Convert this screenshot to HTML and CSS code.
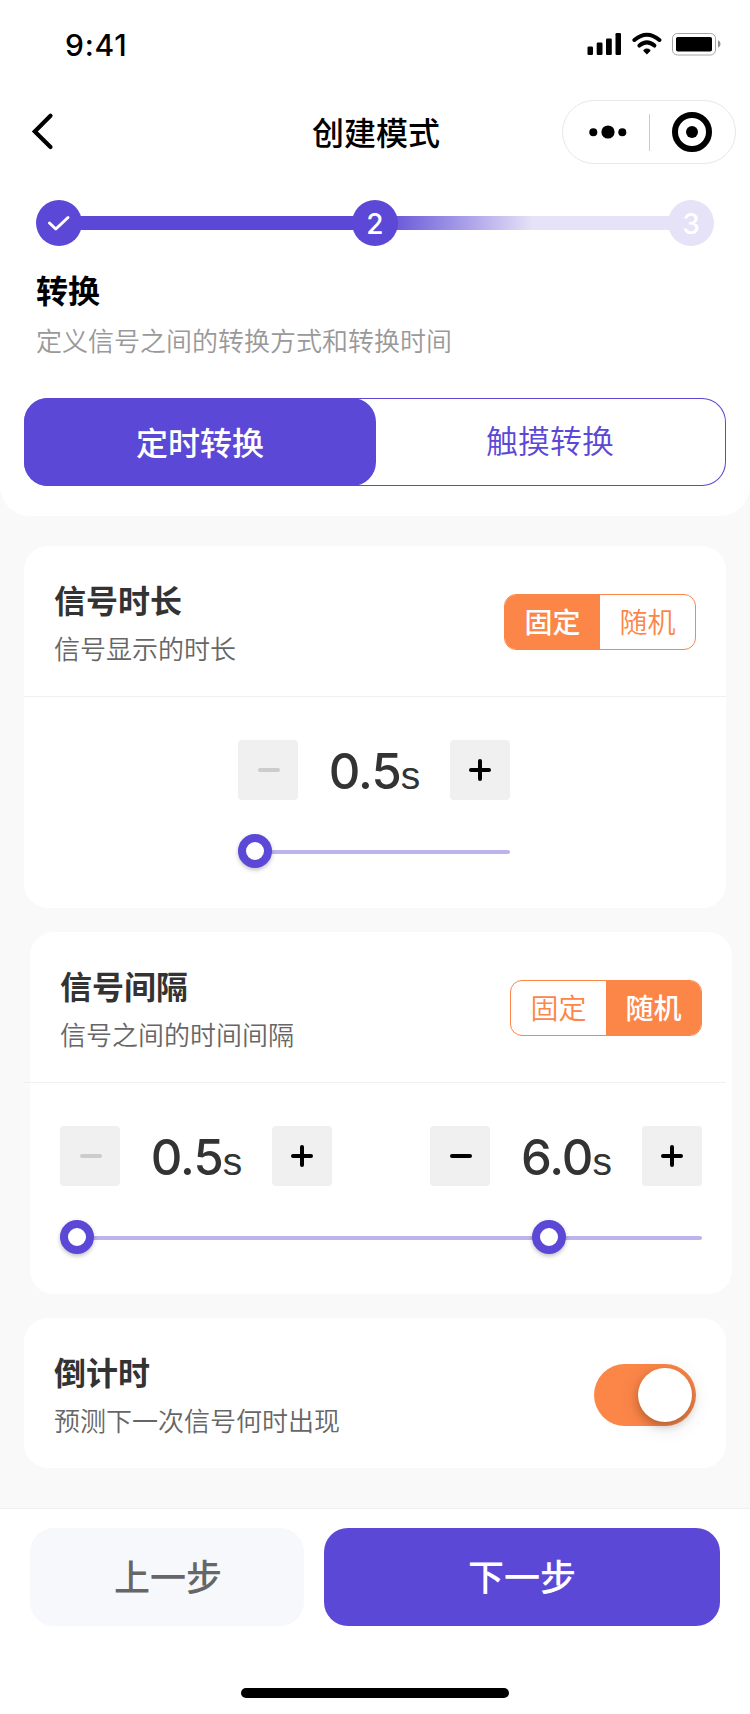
FILE: index.html
```html
<!DOCTYPE html>
<html lang="zh-CN">
<head>
    <meta charset="UTF-8">
    <meta name="viewport" content="width=device-width, initial-scale=1.0">
    <title>创建模式</title>
    <link rel="stylesheet" href="styles.css">
</head>
<body>
    <header class="top">
        <div class="status-bar">
            <span class="time">9:41</span>
            <svg class="status-icons" width="136" height="24" viewBox="0 0 136 24">
                <rect x="0.5" y="14.5" width="5.5" height="8.5" rx="1.2"/>
                <rect x="9.7" y="10.5" width="5.8" height="12.5" rx="1.2"/>
                <rect x="19" y="6.5" width="5.8" height="16.5" rx="1.2"/>
                <rect x="28.5" y="1" width="5.5" height="22" rx="1.2"/>
                <path d="M47.4 8 Q59.9 -2.4 72.4 8" fill="none" stroke="#000" stroke-width="4" stroke-linecap="round"/>
                <path d="M52.4 13.6 Q59.9 7.2 67.4 13.6" fill="none" stroke="#000" stroke-width="4" stroke-linecap="round"/>
                <path d="M56.4 18 Q59.9 15.2 63.4 18 Q63.7 18.8 62.9 19.6 L59.9 22.4 L56.9 19.6 Q56.1 18.8 56.4 18 Z"/>
                <rect x="85.5" y="1.5" width="43" height="21.5" rx="5" fill="none" stroke="#a6a6a6"/>
                <rect x="89" y="5" width="36" height="14.6" rx="1.8"/>
                <path d="M131 8.3 Q133.6 9.4 133.6 12 Q133.6 14.6 131 15.7 Z" fill="#8f8f8f"/>
            </svg>
        </div>

        <div class="nav">
            <svg class="back" width="24" height="40" viewBox="0 0 24 40">
                <path d="M20.5 3.8 L4.8 19.4 L20.5 35" fill="none" stroke="#000" stroke-width="4.2" stroke-linecap="round"/>
            </svg>
            <h1 class="nav-title">创建模式</h1>
            <div class="capsule">
                <svg width="38" height="14" viewBox="0 0 38 14">
                    <circle cx="4.3" cy="7.3" r="4"/>
                    <circle cx="19" cy="7" r="6.6"/>
                    <circle cx="33.3" cy="7.3" r="4"/>
                </svg>
                <span class="capsule-line"></span>
                <svg width="40" height="40" viewBox="0 0 40 40">
                    <circle cx="20" cy="20" r="17" fill="none" stroke="#000" stroke-width="6"/>
                    <circle cx="20" cy="20" r="6"/>
                </svg>
            </div>
        </div>

        <div class="steps">
            <span class="step done">
                <svg width="24" height="18" viewBox="0 0 24 18">
                    <path d="M2.5 8 L8.8 14 L21 2.5" fill="none" stroke="#fff" stroke-width="3" stroke-linecap="round" stroke-linejoin="round"/>
                </svg>
            </span>
            <span class="step-line"></span>
            <span class="step">2</span>
            <span class="step-line fade"></span>
            <span class="step todo">3</span>
        </div>

        <h2 class="step-title">转换</h2>
        <p class="step-desc">定义信号之间的转换方式和转换时间</p>

        <div class="tabs">
            <div class="tab active">定时转换</div>
            <div class="tab">触摸转换</div>
        </div>
    </header>

    <main>
        <section class="card">
            <div class="card-head">
                <div>
                    <h3 class="card-title">信号时长</h3>
                    <p class="card-desc">信号显示的时长</p>
                </div>
                <div class="segment">
                    <span class="option active">固定</span>
                    <span class="option">随机</span>
                </div>
            </div>
            <div class="card-body single">
                <div class="steppers">
                    <div class="stepper">
                        <button class="minus disabled"></button>
                        <span class="value">0.5<small>s</small></span>
                        <button class="plus"></button>
                    </div>
                </div>
                <div class="slider">
                    <span class="thumb" style="left: 0"></span>
                </div>
            </div>
        </section>

        <section class="card shifted">
            <div class="card-head">
                <div>
                    <h3 class="card-title">信号间隔</h3>
                    <p class="card-desc">信号之间的时间间隔</p>
                </div>
                <div class="segment">
                    <span class="option">固定</span>
                    <span class="option active">随机</span>
                </div>
            </div>
            <div class="card-body">
                <div class="steppers">
                    <div class="stepper">
                        <button class="minus disabled"></button>
                        <span class="value">0.5<small>s</small></span>
                        <button class="plus"></button>
                    </div>
                    <div class="stepper">
                        <button class="minus"></button>
                        <span class="value">6.0<small>s</small></span>
                        <button class="plus"></button>
                    </div>
                </div>
                <div class="slider">
                    <span class="thumb" style="left: 0"></span>
                    <span class="thumb" style="left: 472px"></span>
                </div>
            </div>
        </section>

        <section class="card">
            <div class="card-head">
                <div>
                    <h3 class="card-title">倒计时</h3>
                    <p class="card-desc">预测下一次信号何时出现</p>
                </div>
                <div class="switch"><span class="knob"></span></div>
            </div>
        </section>
    </main>

    <footer class="bottom">
        <div class="actions">
            <button class="prev">上一步</button>
            <button class="next">下一步</button>
        </div>
        <div class="home-bar"></div>
    </footer>
</body>
</html>
```
FILE: styles.css
```css
*{
    box-sizing: border-box;
}
body{
    margin: 0;
    width: 750px;
    height: 1714px;
    display: flex;
    flex-direction: column;
    background-color: #f9f9f9;
    color: #333;
    font-family: Inter, "Noto Sans CJK SC", sans-serif;
}
h1, h2, h3, p{
    margin: 0;
}
button{
    border: none;
    padding: 0;
    font-family: inherit;
}
.top{
    height: 516px;
    background-color: white;
    border-radius: 0 0 30px 30px;
}

/* status bar */
.status-bar{
    height: 88px;
    padding: 0 28px 0 65px;
    display: flex;
    justify-content: space-between;
    align-items: center;
}
.time{
    font-size: 30px;
    font-weight: 450;
    line-height: 40px;
    letter-spacing: 0.8px;
    padding-top: 1px;
    color: black;
}
.status-icons{
    margin-right: -1px;
}

/* navigation */
.nav{
    height: 88px;
    padding: 0 14px 0 30px;
    display: grid;
    grid-template-columns: 174px 1fr 174px;
    align-items: center;
}
.nav-title{
    color: black;
    font-size: 32px;
    font-weight: 500;
    line-height: 44px;
    text-align: center;
    padding-top: 3px;
    margin-right: 14px;
}
.capsule{
    height: 64px;
    border: 1px solid #e8e8e8;
    border-radius: 32px;
    padding: 0 23px 0 26px;
    display: flex;
    align-items: center;
    justify-content: space-between;
}
.capsule-line{
    width: 1px;
    height: 37px;
    background-color: #ccc;
}

/* steps */
.steps{
    padding: 24px 36px 0;
    display: flex;
    align-items: center;
}
.step{
    width: 46px;
    height: 46px;
    border-radius: 50%;
    background-color: #5b48d6;
    color: white;
    font-size: 28px;
    font-weight: 500;
    display: flex;
    align-items: center;
    justify-content: center;
    padding-top: 2px;
    z-index: 1;
}
.todo{
    background-color: #e6e2f7;
}
.step-line{
    flex: 1;
    height: 14px;
    margin: 0 -3px;
    background-color: #5b48d6;
}
.fade{
    background: linear-gradient(to right, #6b5ad9, #e6e2f7 50%);
}
.step-title{
    margin: 24px 36px 0;
    font-size: 32px;
    line-height: 44px;
    color: black;
}
.step-desc{
    margin: 10px 36px 0;
    font-size: 26px;
    font-weight: 350;
    line-height: 36px;
    color: #999;
}

/* tabs */
.tabs{
    height: 88px;
    margin: 38px 24px 0;
    display: flex;
    border-radius: 24px;
    box-shadow: inset 0 0 0 1px #5b48d6;
}
.tab{
    width: 350px;
    font-size: 32px;
    font-weight: 350;
    line-height: 87px;
    text-align: center;
    padding-right: 2px;
    color: #5b48d6;
}
.tab.active{
    width: 352px;
    padding-right: 0;
    line-height: 91px;
    height: 88px;
    font-weight: 500;
    color: white;
    background-color: #5b48d6;
    border-radius: 24px;
}

/* cards */
main{
    flex: 1;
    padding: 30px 24px 0;
    display: flex;
    flex-direction: column;
    gap: 24px;
}
.card{
    background-color: white;
    border-radius: 24px;
}
.card-head{
    height: 150px;
    padding: 0 30px;
    display: flex;
    justify-content: space-between;
    align-items: center;
}
.card-title{
    font-size: 32px;
    font-weight: 700;
    line-height: 44px;
    margin-top: 6px;
}
.card-desc{
    font-size: 26px;
    font-weight: 350;
    line-height: 36px;
    margin-top: 8px;
    color: #666;
}
.card-body{
    height: 212px;
    padding: 43px 30px 0;
    border-top: 1px solid #f0f0f0;
}
.single{
    padding: 43px 216px 0 214px;
}
.shifted{
    margin: 0 -6px 0 6px;
}
/* the divider stays on the page grid while the card is shifted */
.shifted .card-body{
    margin-left: -6px;
    margin-right: 6px;
    padding: 43px 24px 0 36px;
}

.segment{
    width: 192px;
    height: 56px;
    margin-top: 2px;
    display: flex;
    border: 1px solid #fc8648;
    border-radius: 12px;
    overflow: hidden;
}
.option{
    flex: 1;
    font-size: 28px;
    font-weight: 350;
    line-height: 56px;
    text-align: center;
    color: #fc8648;
}
.option.active{
    background-color: #fc8648;
    color: white;
    font-weight: 500;
}

.steppers{
    display: flex;
    justify-content: space-between;
}
.stepper{
    width: 272px;
    height: 60px;
    display: flex;
    justify-content: space-between;
}
.minus, .plus{
    width: 60px;
    height: 60px;
    display: flex;
    align-items: center;
    justify-content: center;
    background-color: #f0f0f0;
    border-radius: 4px;
    color: black;
}
.minus::before, .plus::before{
    content: "";
    width: 22px;
    height: 4px;
    border-radius: 2px;
    background-color: currentColor;
}
.minus::before{
    margin-left: 2px;
}
.plus::after{
    content: "";
    width: 4px;
    height: 22px;
    margin-left: -13px;
    margin-right: 9px;
    border-radius: 2px;
    background-color: currentColor;
}
.disabled{
    color: #ccc;
}
.value{
    font-size: 49px;
    font-weight: 550;
    line-height: 64px;
    letter-spacing: -1px;
}
.value small{
    font-family: "Liberation Sans", sans-serif;
    font-size: 39px;
    font-weight: 400;
    line-height: 40px;
}

.slider{
    position: relative;
    height: 4px;
    margin-top: 50px;
    border-radius: 2px;
    background-color: #bdb3ee;
}
.thumb{
    position: absolute;
    top: -16px;
    width: 34px;
    height: 34px;
    border: 8px solid #5b48d6;
    border-radius: 50%;
    background-color: white;
    box-shadow: 0 2px 4px rgba(0,0,0,0.25);
}

.switch{
    width: 102px;
    height: 62px;
    margin-top: 4px;
    padding: 4px;
    display: flex;
    justify-content: flex-end;
    border-radius: 31px;
    background-color: #fc8648;
}
.knob{
    width: 54px;
    height: 54px;
    border-radius: 50%;
    background-color: white;
    box-shadow: 0 4px 8px rgba(0,0,0,0.2), 0 4px 20px rgba(0,0,0,0.15);
}

/* bottom */
.bottom{
    height: 206px;
    padding: 19px 30px 0;
    border-top: 1px solid #f0f0f0;
    background-color: white;
}
.actions{
    display: flex;
    gap: 20px;
}
.prev, .next{
    height: 98px;
    padding-bottom: 4px;
    border-radius: 24px;
    font-size: 36px;
    font-weight: 500;
}
.prev{
    width: 274px;
    padding-left: 2px;
    background-color: #f7f8fc;
    color: #666;
}
.next{
    width: 396px;
    background-color: #5b48d6;
    color: white;
}
.home-bar{
    width: 268px;
    height: 10px;
    margin: 62px auto 0;
    border-radius: 5px;
    background-color: black;
}
```
